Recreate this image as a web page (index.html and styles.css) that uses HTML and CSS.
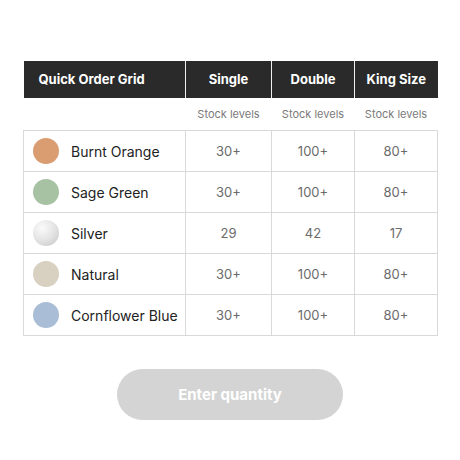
FILE: index.html
```html
<!DOCTYPE html>
<html>
<head>
<meta charset="utf-8">
<link rel="stylesheet" href="styles.css">
</head>
<body>
<div class="page">
  <table class="grid">
    <colgroup>
      <col class="c-name">
      <col class="c-single">
      <col class="c-double">
      <col class="c-king">
    </colgroup>
    <thead>
      <tr class="head">
        <th class="first">Quick Order Grid</th>
        <th>Single</th>
        <th>Double</th>
        <th>King Size</th>
      </tr>
      <tr class="sub">
        <td></td>
        <td>Stock levels</td>
        <td>Stock levels</td>
        <td>Stock levels</td>
      </tr>
    </thead>
    <tbody>
      <tr>
        <td class="name"><span class="swatch orange"></span><span>Burnt Orange</span></td>
        <td>30+</td><td>100+</td><td>80+</td>
      </tr>
      <tr>
        <td class="name"><span class="swatch sage"></span><span>Sage Green</span></td>
        <td>30+</td><td>100+</td><td>80+</td>
      </tr>
      <tr>
        <td class="name"><span class="swatch silver"></span><span>Silver</span></td>
        <td>29</td><td>42</td><td>17</td>
      </tr>
      <tr>
        <td class="name"><span class="swatch natural"></span><span>Natural</span></td>
        <td>30+</td><td>100+</td><td>80+</td>
      </tr>
      <tr>
        <td class="name"><span class="swatch blue"></span><span>Cornflower Blue</span></td>
        <td>30+</td><td>100+</td><td>80+</td>
      </tr>
    </tbody>
  </table>
  <div class="actions">
    <button class="cta">Enter quantity</button>
  </div>
</div>
</body>
</html>
```
FILE: styles.css
```css
html, body {
  margin: 0;
  padding: 0;
  background: #ffffff;
}
body {
  font-family: Inter, "Noto Sans", sans-serif;
  color: #222;
}
.page {
  padding: 61px 23px 0;
}
.grid {
  width: 414px;
  border-collapse: collapse;
  table-layout: fixed;
}
.c-name { width: 162px; }
.c-single { width: 86px; }
.c-double { width: 83px; }
.c-king { width: 83px; }
.grid th, .grid td {
  padding: 0;
}
.head th {
  background: #2a2a2a;
  color: #fff;
  height: 37px;
  font-size: 13px;
  font-weight: 700;
  text-align: center;
  border-left: 1px solid #f0f0f0;
  padding-bottom: 2px;
  box-sizing: border-box;
}
.head th:first-child { border-left: none; }
.head th.first {
  text-align: left;
  padding-left: 15px;
}
.sub td {
  height: 32px;
  font-size: 11px;
  color: #7a7a7a;
  text-align: center;
}
tbody td {
  height: 41px;
  border: 1px solid #d9d9d9;
  text-align: center;
  font-size: 13px;
  color: #6b6b6b;
  padding-bottom: 2px;
  box-sizing: border-box;
}
tbody td.name {
  text-align: left;
  color: #222;
  font-size: 14px;
  padding-left: 9px;
}
td.name span:last-child {
  vertical-align: middle;
}
.swatch {
  display: inline-block;
  width: 26px;
  height: 26px;
  border-radius: 50%;
  vertical-align: middle;
  margin-right: 12px;
}
.orange { background: #da9c71; }
.sage { background: #a7c2a3; }
.silver { background: radial-gradient(circle at 35% 30%, #fafafa 0%, #e4e4e4 50%, #c4c4c4 100%); }
.natural { background: #d8d0c0; }
.blue { background: #a9bdd6; }
.actions {
  display: flex;
  justify-content: center;
  margin-top: 33px;
}
.cta {
  width: 226px;
  height: 51px;
  border: none;
  border-radius: 26px;
  background: #d4d4d4;
  color: #fff;
  font-family: Inter, "Noto Sans", sans-serif;
  font-size: 15px;
  font-weight: 700;
}
```
